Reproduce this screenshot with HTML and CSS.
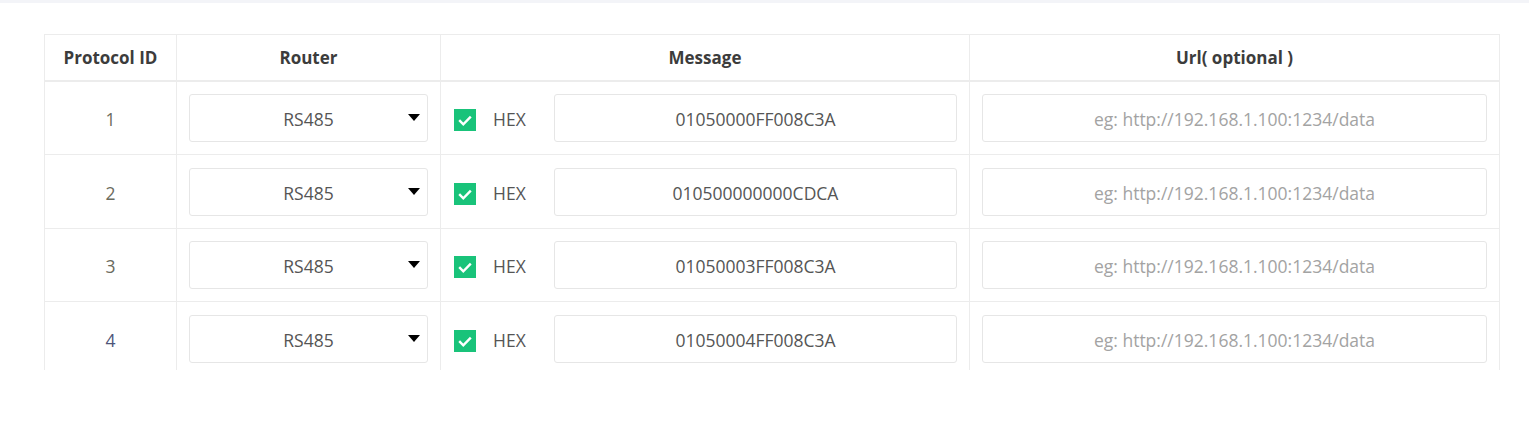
FILE: index.html
```html
<!DOCTYPE html>
<html>
<head>
<meta charset="utf-8">
<link rel="stylesheet" href="styles.css">
</head>
<body>
<div class="topbar"></div>
<div class="wrap">
  <table class="grid">
    <colgroup>
      <col class="c1"><col class="c2"><col class="c3"><col class="c4">
    </colgroup>
    <thead>
      <tr>
        <th>Protocol ID</th>
        <th>Router</th>
        <th>Message</th>
        <th>Url( optional )</th>
      </tr>
    </thead>
    <tbody>
      <tr>
        <td class="id">1</td>
        <td><div class="select"><span>RS485</span><i class="caret"></i></div></td>
        <td><div class="msg"><span class="check"><svg viewBox="0 0 22 22" width="22" height="22"><path d="M5.2 11.2 L9.3 15.3 L16.8 7.6" fill="none" stroke="#fff" stroke-width="2.4"/></svg></span><span class="hex">HEX</span><div class="field">01050000FF008C3A</div></div></td>
        <td><div class="field ph">eg: http://192.168.1.100:1234/data</div></td>
      </tr>
      <tr class="tall">
        <td class="id">2</td>
        <td><div class="select"><span>RS485</span><i class="caret"></i></div></td>
        <td><div class="msg"><span class="check"><svg viewBox="0 0 22 22" width="22" height="22"><path d="M5.2 11.2 L9.3 15.3 L16.8 7.6" fill="none" stroke="#fff" stroke-width="2.4"/></svg></span><span class="hex">HEX</span><div class="field">010500000000CDCA</div></div></td>
        <td><div class="field ph">eg: http://192.168.1.100:1234/data</div></td>
      </tr>
      <tr>
        <td class="id">3</td>
        <td><div class="select"><span>RS485</span><i class="caret"></i></div></td>
        <td><div class="msg"><span class="check"><svg viewBox="0 0 22 22" width="22" height="22"><path d="M5.2 11.2 L9.3 15.3 L16.8 7.6" fill="none" stroke="#fff" stroke-width="2.4"/></svg></span><span class="hex">HEX</span><div class="field">01050003FF008C3A</div></div></td>
        <td><div class="field ph">eg: http://192.168.1.100:1234/data</div></td>
      </tr>
      <tr class="tall">
        <td class="id id4">4</td>
        <td><div class="select"><span>RS485</span><i class="caret"></i></div></td>
        <td><div class="msg"><span class="check"><svg viewBox="0 0 22 22" width="22" height="22"><path d="M5.2 11.2 L9.3 15.3 L16.8 7.6" fill="none" stroke="#fff" stroke-width="2.4"/></svg></span><span class="hex">HEX</span><div class="field">01050004FF008C3A</div></div></td>
        <td><div class="field ph">eg: http://192.168.1.100:1234/data</div></td>
      </tr>
    </tbody>
  </table>
</div>
</body>
</html>
```

FILE: styles.css
```css
* { box-sizing: border-box; }
html, body { margin: 0; padding: 0; background: #fff; }
body {
  font-family: "Open Sans", "Noto Sans", "Liberation Sans", sans-serif;
  color: #555;
  font-size: 17.5px;
}
.topbar { height: 3px; background: #f3f4f8; }
.wrap {
  margin: 31px 0 0 44px;
  width: 1456px;
  height: 336px;
  overflow: hidden;
}
.grid {
  width: 1455px;
  border-collapse: collapse;
  table-layout: fixed;
}
.c1 { width: 132px; }
.c2 { width: 264px; }
.c3 { width: 529px; }
.c4 { width: 530px; }
th, td { border: 1px solid #ececec; text-align: center; }
th {
  height: 46px;
  font-weight: 700;
  font-size: 17px;
  color: #3c3c3c;
  border-bottom: 2px solid #ececec;
  padding: 0 12px;
}
td { padding: 12px; height: 73px; }
tr.tall td { height: 74px; padding-top: 13px; }
td.id { color: #6b6b5e; padding-top: 14px; }
tr.tall td.id { padding-top: 15px; }
td.id4 { color: #4e5579; }
.select {
  position: relative;
  height: 48px;
  border: 1px solid #e6e6e6;
  border-radius: 3px;
  display: flex;
  align-items: center;
  justify-content: center;
  color: #555;
  padding-top: 2px;
}
.caret {
  position: absolute;
  right: 7px;
  top: 19px;
  width: 0; height: 0;
  border-left: 6.5px solid transparent;
  border-right: 6.5px solid transparent;
  border-top: 7px solid #000;
}
.msg { display: flex; align-items: center; }
.check {
  flex: none;
  width: 22px; height: 22px;
  background: #19c37a;
  margin: 5px 17px 0 1px;
  display: block;
}
.check svg { display: block; }
.hex { width: 61px; text-align: left; flex: none; color: #555; margin-top: 3px; }
.field {
  flex: 1;
  height: 48px;
  border: 1px solid #e6e6e6;
  border-radius: 3px;
  display: flex;
  align-items: center;
  justify-content: center;
  color: #555;
  padding-top: 2px;
}
.field.ph { color: #a3a3a3; }
```
